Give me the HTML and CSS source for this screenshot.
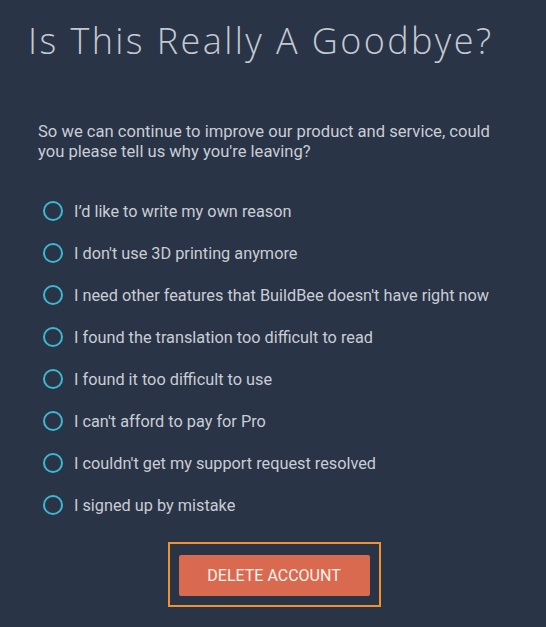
FILE: index.html
```html
<!DOCTYPE html>
<html lang="en">
<head>
  <meta charset="UTF-8">
  <title>Delete Account</title>
  <link rel="stylesheet" href="styles.css">
</head>
<body>
  <div class="container">
    <h1 class="title">Is This Really A Goodbye?</h1>

    <p class="intro">So we can continue to improve our product and service, could you please tell us why you're leaving?</p>

    <ul class="reasons">
      <li class="reason"><span class="radio"></span>I’d like to write my own reason</li>
      <li class="reason"><span class="radio"></span>I don't use 3D printing anymore</li>
      <li class="reason"><span class="radio"></span>I need other features that BuildBee doesn't have right now</li>
      <li class="reason"><span class="radio"></span>I found the translation too difficult to read</li>
      <li class="reason"><span class="radio"></span>I found it too difficult to use</li>
      <li class="reason"><span class="radio"></span>I can't afford to pay for Pro</li>
      <li class="reason"><span class="radio"></span>I couldn't get my support request resolved</li>
      <li class="reason"><span class="radio"></span>I signed up by mistake</li>
    </ul>

    <div class="actions">
      <div class="focus-ring">
        <button class="delete-btn">Delete Account</button>
      </div>
    </div>
  </div>
</body>
</html>
```

FILE: styles.css
```css
*
    {
    margin: 0;
    padding: 0;
    box-sizing: border-box;
    }

:root
    {
    --bg: #293447;
    --txt: #c9cdd4;
    --cyn: #3fb7cf;
    --org: #f0922f;
    --red: #d96a50;
    }

body
    {
    background-color: var(--bg);
    font-family: Roboto, "Liberation Sans", sans-serif;
    color: var(--txt);
    }

.container
    {
    padding: 16px 0 0 0;
    }

.title
    {
    padding-left: 28px;
    font-family: "Open Sans", sans-serif;
    font-weight: 300;
    font-size: 36px;
    line-height: 50px;
    letter-spacing: 2.4px;
    color: #c4c9d1;
    }

.intro
    {
    margin-top: 56px;
    padding: 0 40px 0 38px;
    font-size: 16.6px;
    line-height: 20px;
    }

.reasons
    {
    list-style: none;
    margin-top: 28px;
    padding-left: 43px;
    }

.reason
    {
    display: flex;
    align-items: center;
    height: 42px;
    font-size: 16.3px;
    }

.radio
    {
    width: 20px;
    height: 20px;
    margin-right: 11px;
    border: 2px solid var(--cyn);
    border-radius: 50%;
    }

.actions
    {
    display: flex;
    justify-content: center;
    margin-top: 16px;
    padding-left: 2px;
    }

.focus-ring
    {
    padding: 11px 9px 9px 9px;
    border: 2px solid var(--org);
    }

.delete-btn
    {
    display: block;
    width: 191px;
    height: 41px;
    background-color: var(--red);
    border: none;
    border-radius: 2px;
    font-family: Roboto, sans-serif;
    font-size: 16px;
    text-transform: uppercase;
    color: #fdf3ee;
    cursor: pointer;
    }
```
